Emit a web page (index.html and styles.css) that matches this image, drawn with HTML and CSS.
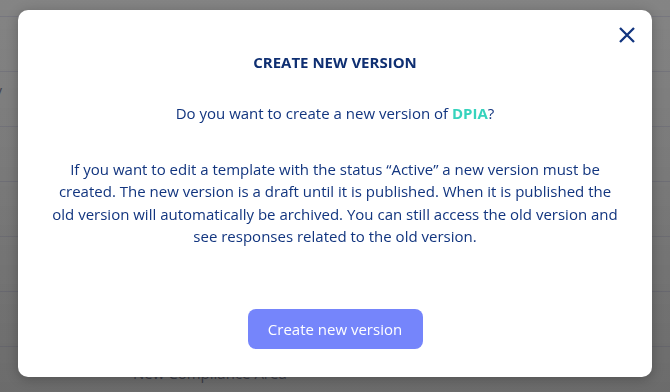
FILE: index.html
```html
<!DOCTYPE html>
<html>
<head>
	<title>Create new version</title>
	<link rel="stylesheet" href="styles.css">
</head>
<body>

<div class="page">
	<div class="row"></div>
	<div class="row"><span class="cell-text first">Processing activity</span></div>
	<div class="row"></div>
	<div class="row"></div>
	<div class="row"></div>
	<div class="row"></div>
	<div class="row"><span class="cell-text second">New Compliance Area</span></div>
</div>

<div class="overlay"></div>

<div class="modal">
	<button class="close" type="button" aria-label="Close">
		<svg width="16" height="16" viewBox="0 0 16 16">
			<path d="M1 1 L15 15 M15 1 L1 15" stroke="#12357f" stroke-width="2.3" fill="none"/>
		</svg>
	</button>

	<h2 class="title">CREATE NEW VERSION</h2>

	<p class="question">Do you want to create a new version of <span class="name">DPIA</span>?</p>

	<p class="info">If you want to edit a template with the status &ldquo;Active&rdquo; a new version must be
	created. The new version is a draft until it is published. When it is published the
	old version will automatically be archived. You can still access the old version and
	see responses related to the old version.</p>

	<div class="actions">
		<button class="primary" type="button">Create new version</button>
	</div>
</div>

</body>
</html>
```

FILE: styles.css
```css
body {
	margin:0;
	font-family:"Open Sans", "Noto Sans", sans-serif;
	color:#12357f;
	background:#fff;
	overflow:hidden;
}

.page {
	padding-top:16px;
}

.row {
	height:54px;
	border-top:1px solid #d6d6f0;
}

.cell-text {
	display:block;
	font-size:15px;
	color:#1f2a55;
	white-space:nowrap;
}
.cell-text.first {
	margin:8px 0 0 -126px;
}
.cell-text.second {
	margin:16px 0 0 133px;
}

.overlay {
	position:fixed;
	top:0;
	left:0;
	right:0;
	bottom:0;
	background:linear-gradient(180deg, rgba(80,80,80,0.7) 0%, rgba(66,66,66,0.78) 100%);
}

.modal {
	position:absolute;
	top:10px;
	left:18px;
	width:634px;
	height:367px;
	box-sizing:border-box;
	background:#fff;
	border-radius:10px;
	box-shadow:0 2px 12px rgba(0,0,0,0.25);
	text-align:center;
	padding:42px 48px 0;
}

.close {
	position:absolute;
	top:17px;
	right:17px;
	width:16px;
	height:16px;
	padding:0;
	border:none;
	background:none;
	cursor:pointer;
}
.close svg {
	display:block;
}

.title {
	margin:0;
	font-size:15px;
	font-weight:700;
	line-height:20px;
	color:#0f2f72;
}

.question {
	margin:30px 0 0;
	font-size:15px;
	line-height:22px;
}
.name {
	color:#36d3bd;
	font-weight:700;
}

.info {
	margin:34px -17px 0;
	font-size:15px;
	line-height:22.3px;
}

.actions {
	margin-top:62px;
}

.primary {
	width:175px;
	height:40px;
	border:none;
	border-radius:8px;
	background:#7585fb;
	color:#fff;
	font-family:"Open Sans", "Noto Sans", sans-serif;
	font-size:15px;
	cursor:pointer;
}
```
